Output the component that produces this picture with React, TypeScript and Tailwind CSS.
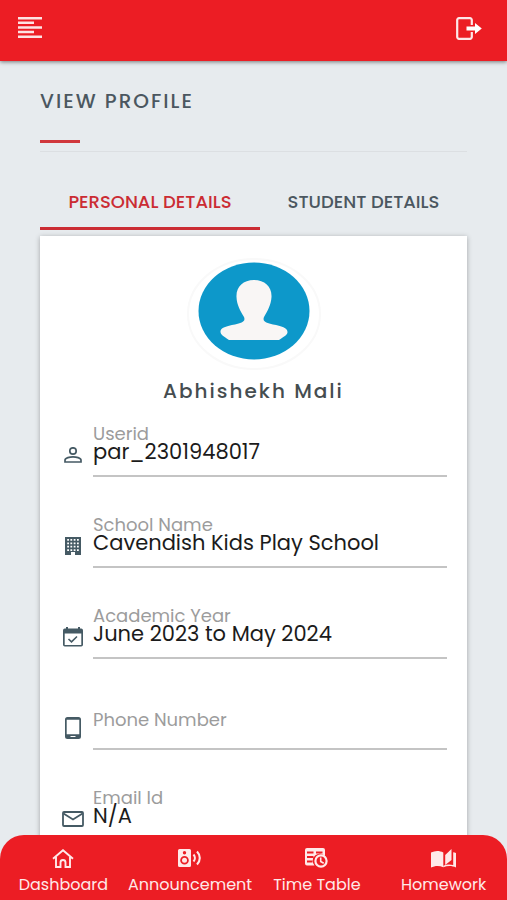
import * as React from "react";

const pageClasses =
  "relative flex h-screen flex-col overflow-hidden bg-[#e7ebee] font-[Poppins,Inter,'Liberation_Sans',sans-serif]";

interface IconProps {
  className?: string;
}

function MenuIcon() {
  return (
    <svg viewBox="0 0 24 21" className="h-[21px] w-6" fill="#fff" aria-hidden>
      <path d="M0 0h24v2.5H0zM0 4.6h16v2.5H0zM0 9.2h24v2.5H0zM0 13.8h16v2.5H0zM0 18.4h24v2.5H0z" opacity=".88" />
    </svg>
  );
}

function LogoutIcon() {
  return (
    <svg viewBox="0 0 26 23" className="h-[23px] w-[26px]" aria-hidden>
      <path
        d="M15.8 8V3a1.8 1.8 0 0 0-1.8-1.8H3A1.8 1.8 0 0 0 1.2 3v17A1.8 1.8 0 0 0 3 21.8h11a1.8 1.8 0 0 0 1.8-1.8v-5"
        fill="none"
        stroke="#fff"
        strokeWidth="2.2"
        opacity=".9"
      />
      <path d="M10.5 9.4H19V6l6.8 5.5L19 17v-3.6h-8.5z" fill="#fff" />
    </svg>
  );
}

function PersonIcon({ className }: IconProps) {
  return (
    <svg viewBox="0 0 18 16" className={className} aria-hidden>
      <circle cx="9" cy="4" r="3.2" fill="none" stroke="currentColor" strokeWidth="1.7" />
      <path
        d="M1 15v-1.8C1 10.8 6 9.8 9 9.8s8 1 8 3.4V15z"
        fill="none"
        stroke="currentColor"
        strokeWidth="1.7"
      />
    </svg>
  );
}

function BuildingIcon({ className }: IconProps) {
  return (
    <svg viewBox="0 0 16 18" className={className} aria-hidden>
      <path
        fill="currentColor"
        fillRule="evenodd"
        d="M0 0h16v18h-6v-3H6v3H0zM2.2 2v1.8H4V2zm3.2 0v1.8h1.8V2zm3.3 0v1.8h1.8V2zM12 2v1.8h1.8V2zM2.2 5.4v1.8H4V5.4zm3.2 0v1.8h1.8V5.4zm3.3 0v1.8h1.8V5.4zm3.3 0v1.8h1.8V5.4zM2.2 8.8v1.8H4V8.8zm3.2 0v1.8h1.8V8.8zm3.3 0v1.8h1.8V8.8zm3.3 0v1.8h1.8V8.8zM2.2 12.2V14H4v-1.8zm3.2 0V14h1.8v-1.8zm3.3 0V14h1.8v-1.8zm3.3 0V14h1.8v-1.8z"
      />
    </svg>
  );
}

function CalendarIcon({ className }: IconProps) {
  return (
    <svg viewBox="0 0 20 20" className={className} aria-hidden>
      <path
        fill="currentColor"
        fillRule="evenodd"
        d="M3 0h2v1.6h10V0h2v1.6h1.2A1.8 1.8 0 0 1 20 3.4v14.4a1.8 1.8 0 0 1-1.8 1.8H1.8A1.8 1.8 0 0 1 0 17.8V3.4a1.8 1.8 0 0 1 1.8-1.8H3zM1.7 6.5v11.4h16.6V6.5z"
      />
      <path d="m5.5 12 3 2.8 5.5-5.3" fill="none" stroke="currentColor" strokeWidth="1.6" />
    </svg>
  );
}

function PhoneIcon({ className }: IconProps) {
  return (
    <svg viewBox="0 0 16 22" className={className} aria-hidden>
      <path
        fill="currentColor"
        fillRule="evenodd"
        d="M2.5 0h11A2.5 2.5 0 0 1 16 2.5v17a2.5 2.5 0 0 1-2.5 2.5h-11A2.5 2.5 0 0 1 0 19.5v-17A2.5 2.5 0 0 1 2.5 0zM1.7 2.7v14.6h12.6V2.7zM5.5 19v1h5v-1z"
      />
    </svg>
  );
}

function MailIcon({ className }: IconProps) {
  return (
    <svg viewBox="0 0 22 16" className={className} fill="none" stroke="currentColor" strokeWidth="1.8" aria-hidden>
      <rect x="1" y="1" width="20" height="14" rx="1" />
      <path d="m1.5 2.5 9.5 6 9.5-6" />
    </svg>
  );
}

function HomeIcon({ className }: IconProps) {
  return (
    <svg viewBox="0 0 22 19" className={className} fill="none" stroke="currentColor" strokeWidth="1.9" aria-hidden>
      <path d="M1 9.8 11 1.2l10 8.6" />
      <path d="M4 8v10h4.5v-4.5a2.5 2.5 0 0 1 5 0V18H18V8" />
    </svg>
  );
}

function SpeakerIcon({ className }: IconProps) {
  return (
    <svg viewBox="0 0 24 18" className={className} aria-hidden>
      <path
        fill="currentColor"
        fillRule="evenodd"
        d="M1.5 0h10A1.5 1.5 0 0 1 13 1.5v15a1.5 1.5 0 0 1-1.5 1.5h-10A1.5 1.5 0 0 1 0 16.5v-15A1.5 1.5 0 0 1 1.5 0zm5 2a1.7 1.7 0 1 0 0 3.4 1.7 1.7 0 0 0 0-3.4zm0 5a4.3 4.3 0 1 0 0 8.6 4.3 4.3 0 0 0 0-8.6z"
      />
      <circle cx="6.5" cy="11.3" r="2.5" fill="currentColor" />
      <path
        d="M15.5 5.5c1.8 2 1.8 5 0 7M19 2.5c3.7 3.7 3.7 9.3 0 13"
        fill="none"
        stroke="currentColor"
        strokeWidth="2.1"
      />
    </svg>
  );
}

function TimeTableIcon({ className }: IconProps) {
  return (
    <svg viewBox="0 0 23 20" className={className} aria-hidden>
      <path
        fill="currentColor"
        fillRule="evenodd"
        d="M2 0h16a2 2 0 0 1 2 2v6.2A6.8 6.8 0 0 0 9.5 17.5H2a2 2 0 0 1-2-2V2a2 2 0 0 1 2-2zm0 3.5v2h6.5v-2zm9 0v2h6.5v-2zM2 8v2h6.5V8zm0 4.5v2h5.5v-2z"
      />
      <circle cx="16" cy="13" r="5.6" fill="none" stroke="currentColor" strokeWidth="2.2" />
      <path d="M15.7 9.5v4l3 1.7" fill="none" stroke="currentColor" strokeWidth="1.6" />
    </svg>
  );
}

function BookIcon({ className }: IconProps) {
  return (
    <svg viewBox="0 0 25 19" className={className} fill="currentColor" aria-hidden>
      <path d="M0 3.6C4 1.6 8.500 1.600 12.300 3.600V18.300C8.500 16.500 4 16.500 0 18.600z" />
      <path d="M14.200 6 20.500 0v11l-6.300 5z" />
      <path d="M22.200 3.200c1 .2 1.900.5 2.800.9v14.500c-3.900-2-8.500-2-12.700-.3V16.700c3.200-1.300 6.500-1.400 9.900-.6z" />
    </svg>
  );
}

function Avatar() {
  return (
    <svg viewBox="0 0 134 112" className="h-28 w-[134px]" role="img" aria-label="Profile photo">
      <ellipse cx="67" cy="56" rx="66" ry="55" fill="#fff" stroke="#f9f9f9" strokeWidth="2" />
      <ellipse cx="67" cy="53" rx="55.5" ry="48.5" fill="#0d98ca" />
      <path
        fill="#f9f6f5"
        d="M67 22c-11 0-18 7-17.5 17 .3 8 4 14 7.5 20 2 5-3 6-9 7.5-9 1.5-15 3.5-14.5 7.5.3 3 3 4 8.500 8h50c5.500-4 8.500-5 8.500-8 0-4-6-6-14.500-7.500-6-1.500-11-2.500-9-7.500 3.500-6 7-12 7.500-20 .5-10-6.500-17-17.500-17z"
      />
    </svg>
  );
}

interface FieldProps {
  id: string;
  label: string;
  value: string;
  icon: React.ReactNode;
}

function Field({ id, label, value, icon }: FieldProps) {
  return (
    <div className="flex gap-[7px]">
      <div className="flex w-[26px] shrink-0 items-center justify-center pt-2 text-[#455a64]">
        {icon}
      </div>
      <div className="relative min-w-0 flex-1">
        <label
          htmlFor={id}
          className={
            value
              ? "absolute left-0 top-0 text-lg leading-[18px] text-[#9c9c9c]"
              : "absolute left-0 top-[13px] text-lg leading-[18px] text-[#9c9c9c]"
          }
        >
          {label}
        </label>
        <input
          id={id}
          type="text"
          readOnly
          defaultValue={value}
          className="block h-[52px] w-full border-b-2 border-[#c4c4c4] bg-transparent pb-[9px] pt-[11px] text-[21px] text-[#1b1b1b] outline-none"
        />
      </div>
    </div>
  );
}

const fields: FieldProps[] = [
  { id: "userid", label: "Userid", value: "par_2301948017", icon: <PersonIcon className="h-4 w-[18px]" /> },
  { id: "school", label: "School Name", value: "Cavendish Kids Play School", icon: <BuildingIcon className="h-[18px] w-4" /> },
  { id: "year", label: "Academic Year", value: "June 2023 to May 2024", icon: <CalendarIcon className="h-5 w-5" /> },
  { id: "phone", label: "Phone Number", value: "", icon: <PhoneIcon className="h-[22px] w-4" /> },
  { id: "email", label: "Email Id", value: "N/A", icon: <MailIcon className="h-4 w-[22px]" /> },
];

const navItems = [
  { label: "Dashboard", icon: <HomeIcon className="h-[19px] w-[22px]" /> },
  { label: "Announcement", icon: <SpeakerIcon className="h-[18px] w-6" /> },
  { label: "Time Table", icon: <TimeTableIcon className="h-5 w-[23px]" /> },
  { label: "Homework", icon: <BookIcon className="h-[19px] w-[25px]" /> },
];

export default function App() {
  return (
    <div className={pageClasses}>
      <header className="z-10 flex h-[61px] shrink-0 items-start justify-between bg-[#ec1d24] pl-[18px] pr-[25px] pt-[17px] shadow-[0_1px_4px_rgba(0,0,0,0.5)]">
        <button type="button" aria-label="Open menu">
          <MenuIcon />
        </button>
        <button type="button" aria-label="Log out">
          <LogoutIcon />
        </button>
      </header>

      <main className="min-h-0 flex-1 overflow-y-auto px-10 pb-20 [scrollbar-width:none]">
        <h1 className="pt-7 text-xl leading-6 font-medium tracking-[2px] text-[#4b5760]">
          VIEW PROFILE
        </h1>
        <div className="mt-[27px] h-[12px] border-b border-[#dcdfe2]">
          <div className="h-[3px] w-10 bg-[#d0373c]" />
        </div>

        <div role="tablist" className="mt-[26px] grid grid-cols-[220px_1fr] text-lg leading-6 font-medium">
          <button
            type="button"
            role="tab"
            aria-selected="true"
            className="border-b-3 border-[#cb2c33] pb-[13px] pt-3 whitespace-nowrap text-[#cb2c33]"
          >
            PERSONAL DETAILS
          </button>
          <button
            type="button"
            role="tab"
            aria-selected="false"
            className="border-b-3 border-transparent pb-[13px] pt-3 whitespace-nowrap text-[#4b5760]"
          >
            STUDENT DETAILS
          </button>
        </div>

        <section className="mt-[6px] bg-white px-5 pb-10 pt-[22px] shadow-[0_1px_5px_rgba(0,0,0,0.3)]">
          <div className="flex flex-col items-center">
            <Avatar />
            <h2 className="mt-[9px] text-xl leading-6 font-medium tracking-[2px] text-[#454d50]">
              Abhishekh Mali
            </h2>
          </div>
          <div className="mt-[22px] flex flex-col gap-[39px]">
            {fields.map((field) => (
              <Field key={field.id} {...field} />
            ))}
          </div>
        </section>
      </main>

      <nav className="absolute inset-x-0 bottom-0 z-10 grid h-[65px] grid-cols-4 rounded-t-3xl bg-[#ec1d24] text-[#ffe9e9]">
        {navItems.map((item) => (
          <a key={item.label} href="#" className="flex flex-col items-center pt-[10px]">
            <span className="flex h-[26px] items-center">{item.icon}</span>
            <span className="mt-1 text-base leading-5 whitespace-nowrap">{item.label}</span>
          </a>
        ))}
      </nav>
    </div>
  );
}
